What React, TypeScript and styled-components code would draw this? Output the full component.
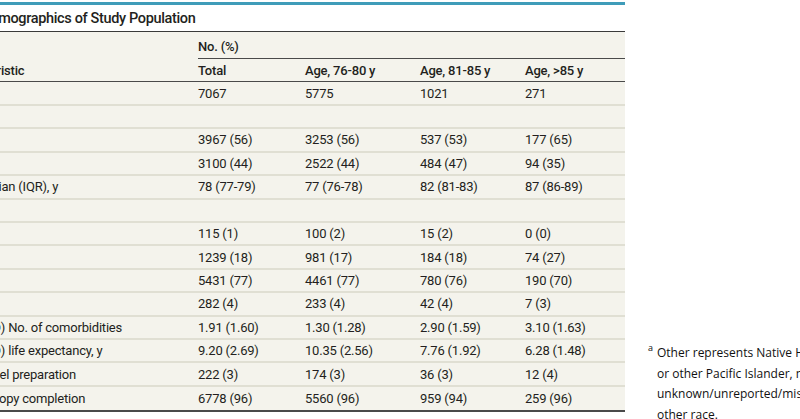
import styled, { createGlobalStyle } from 'styled-components';

const GlobalStyle = createGlobalStyle`
	html, body {
		margin: 0;
		padding: 0;
		background: #ffffff;
		overflow: hidden;
	}
	body {
		font-family: Roboto, 'Open Sans', sans-serif;
		color: #231f20;
	}
`;

const CROP = 70;

const Frame = styled.div`
	width: 800px;
	height: 419px;
	overflow: hidden;
`;

const Page = styled.div`
	display: flex;
	align-items: flex-start;
	margin-left: -${CROP}px;
	padding-top: 2px;
`;

const Panel = styled.section`
	width: ${625 + CROP}px;
	flex-shrink: 0;
`;

const TopRule = styled.div`
	height: 3px;
	background-color: #3f9cb9;
`;

const Title = styled.h2`
	margin: 0;
	height: 26px;
	display: flex;
	align-items: center;
	font-size: 14.5px;
	font-weight: 500;
	letter-spacing: -0.35px;
	color: #231f20;
	border-bottom: 1.5px solid #3a3a3a;
`;

const Table = styled.div`
	background: #f4f3ec;
	border-bottom: 2px solid #4a4a4a;
	letter-spacing: -0.2px;
`;

const columns = `${198 + CROP}px 107px 115px 105px 100px`;

const Row = styled.div<{ $head?: boolean; $rule?: 'dark' | 'light' }>`
	display: grid;
	grid-template-columns: ${columns};
	height: 23.43px;
	box-sizing: border-box;
	align-items: center;
	font-size: 13px;
	font-weight: ${(p) => (p.$head ? 500 : 400)};
	border-bottom: ${(p) =>
		p.$rule === 'dark' ? '1.5px solid #4a4a4a' : p.$rule === 'light' ? '2px solid #e0dfd3' : 'none'};
	&:last-child {
		border-bottom: none;
	}
`;

const GroupHead = styled.div`
	display: grid;
	grid-template-columns: ${198 + CROP}px 1fr;
	height: 27px;
	font-size: 13px;
	font-weight: 500;
`;

const Spanner = styled.div`
	display: flex;
	align-items: center;
	padding-top: 2px;
	border-bottom: 1.5px solid #4a4a4a;
`;

const Label = styled.div<{ $indent?: number }>`
	padding-left: ${(p) => 16 + (p.$indent ?? 0)}px;
	white-space: nowrap;
`;

const Cell = styled.div`
	white-space: nowrap;
`;

const Footnote = styled.p`
	margin: 341px 0 0 23px;
	font-family: 'Open Sans', sans-serif;
	font-size: 12px;
	line-height: 20.7px;
	color: #111;
	white-space: nowrap;
	padding-left: 9px;
	position: relative;
`;

const Sup = styled.sup`
	position: absolute;
	left: 0;
	top: -5px;
	font-size: 9px;
`;

type Data = { label: string; indent?: number; values?: string[] };

const rows: Data[] = [
	{ label: 'No.', values: ['7067', '5775', '1021', '271'] },
	{ label: 'Sex' },
	{ label: 'Male', indent: 12, values: ['3967 (56)', '3253 (56)', '537 (53)', '177 (65)'] },
	{ label: 'Female', indent: 12, values: ['3100 (44)', '2522 (44)', '484 (47)', '94 (35)'] },
	{ label: 'Age, median (IQR), y', values: ['78 (77-79)', '77 (76-78)', '82 (81-83)', '87 (86-89)'] },
	{ label: 'Race' },
	{ label: 'Asian', indent: 12, values: ['115 (1)', '100 (2)', '15 (2)', '0 (0)'] },
	{ label: 'Black', indent: 12, values: ['1239 (18)', '981 (17)', '184 (18)', '74 (27)'] },
	{ label: 'White', indent: 12, values: ['5431 (77)', '4461 (77)', '780 (76)', '190 (70)'] },
	{ label: 'Other', indent: 12, values: ['282 (4)', '233 (4)', '42 (4)', '7 (3)'] },
	{ label: 'Mean (SD) No. of comorbidities', values: ['1.91 (1.60)', '1.30 (1.28)', '2.90 (1.59)', '3.10 (1.63)'] },
	{ label: 'Mean (SD) life expectancy, y', values: ['9.20 (2.69)', '10.35 (2.56)', '7.76 (1.92)', '6.28 (1.48)'] },
	{ label: 'Poor bowel preparation', values: ['222 (3)', '174 (3)', '36 (3)', '12 (4)'] },
	{ label: 'Colonoscopy completion', values: ['6778 (96)', '5560 (96)', '959 (94)', '259 (96)'] },
];

export default function App() {
	return (
		<>
			<GlobalStyle />
			<Frame>
				<Page>
					<Panel>
						<TopRule />
						<Title>Table 1. Demographics of Study Population</Title>
						<Table>
							<GroupHead>
								<div />
								<Spanner>No. (%)</Spanner>
							</GroupHead>
							<Row $head $rule="dark">
								<Label>Characteristic</Label>
								<Cell>Total</Cell>
								<Cell>Age, 76-80 y</Cell>
								<Cell>Age, 81-85 y</Cell>
								<Cell>Age, &gt;85 y</Cell>
							</Row>
							{rows.map((r) => (
								<Row key={r.label} $rule="light">
									<Label $indent={r.indent}>{r.label}</Label>
									{(r.values ?? ['', '', '', '']).map((v, i) => (
										<Cell key={i}>{v}</Cell>
									))}
								</Row>
							))}
						</Table>
					</Panel>
					<Footnote>
						<Sup>a</Sup>
						Other represents Native Hawaiian
						<br />
						or other Pacific Islander, multiple,
						<br />
						unknown/unreported/missing, or
						<br />
						other race.
					</Footnote>
				</Page>
			</Frame>
		</>
	);
}
